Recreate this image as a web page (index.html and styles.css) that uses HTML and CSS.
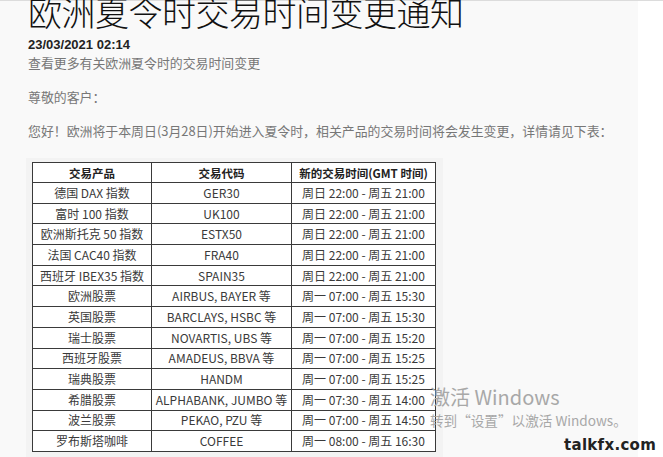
FILE: index.html
```html
<!DOCTYPE html>
<html lang="zh-CN">
<head>
<meta charset="utf-8">
<link rel="stylesheet" href="styles.css">
</head>
<body>
<div class="page">
  <main class="article">
    <h1 class="title">欧洲夏令时交易时间变更通知</h1>
    <div class="date">23/03/2021 02:14</div>
    <p class="sub">查看更多有关欧洲夏令时的交易时间变更</p>
    <p class="para">尊敬的客户：</p>
    <p class="para">您好！欧洲将于本周日(3月28日)开始进入夏令时，相关产品的交易时间将会发生变更，详情请见下表：</p>
    <div class="panel">
      <table class="hours">
        <thead>
          <tr><th class="c1">交易产品</th><th class="c2">交易代码</th><th class="c3">新的交易时间(GMT 时间)</th></tr>
        </thead>
        <tbody>
          <tr><td>德国 DAX 指数</td><td>GER30</td><td>周日 22:00 - 周五 21:00</td></tr>
          <tr><td>富时 100 指数</td><td>UK100</td><td>周日 22:00 - 周五 21:00</td></tr>
          <tr><td>欧洲斯托克 50 指数</td><td>ESTX50</td><td>周日 22:00 - 周五 21:00</td></tr>
          <tr><td>法国 CAC40 指数</td><td>FRA40</td><td>周日 22:00 - 周五 21:00</td></tr>
          <tr><td>西班牙 IBEX35 指数</td><td>SPAIN35</td><td>周日 22:00 - 周五 21:00</td></tr>
          <tr><td>欧洲股票</td><td>AIRBUS, BAYER 等</td><td>周一 07:00 - 周五 15:30</td></tr>
          <tr><td>英国股票</td><td>BARCLAYS, HSBC 等</td><td>周一 07:00 - 周五 15:30</td></tr>
          <tr><td>瑞士股票</td><td>NOVARTIS, UBS 等</td><td>周一 07:00 - 周五 15:20</td></tr>
          <tr><td>西班牙股票</td><td>AMADEUS, BBVA 等</td><td>周一 07:00 - 周五 15:25</td></tr>
          <tr><td>瑞典股票</td><td>HANDM</td><td>周一 07:00 - 周五 15:25</td></tr>
          <tr><td>希腊股票</td><td>ALPHABANK, JUMBO 等</td><td>周一 07:30 - 周五 14:00</td></tr>
          <tr><td>波兰股票</td><td>PEKAO, PZU 等</td><td>周一 07:00 - 周五 14:50</td></tr>
          <tr><td>罗布斯塔咖啡</td><td>COFFEE</td><td>周一 08:00 - 周五 16:30</td></tr>
        </tbody>
      </table>
    </div>
  </main>
  <aside class="side"></aside>
</div>
<div class="activate">
  <div class="act-title">激活 Windows</div>
  <div class="act-sub">转到“设置”以激活 Windows。</div>
</div>
<div class="brand">talkfx.com</div>
</body>
</html>
```
FILE: styles.css
```css
html, body {
  margin: 0;
  padding: 0;
  height: 100%;
  overflow: hidden;
}
body {
  font-family: "Noto Sans CJK SC", "Noto Sans", sans-serif;
  background: #ffffff;
  color: #333;
}
.page {
  display: flex;
  height: 457px;
  border-top: 1px solid #dcdcdc;
  box-sizing: border-box;
}
.article {
  width: 638px;
  background: #f9f9f9;
  padding: 0 0 0 28px;
  box-sizing: border-box;
}
.side {
  flex: 1;
  background: #ffffff;
}
.title {
  margin: -9px 0 0 0;
  font-size: 34px;
  line-height: 40px;
  font-weight: 300;
  color: #111;
  letter-spacing: -0.5px;
}
.date {
  margin-top: 5px;
  font-family: "Liberation Sans", Arial, sans-serif;
  font-weight: bold;
  font-size: 13px;
  line-height: 16px;
  color: #222;
}
.sub, .para {
  margin: 0;
  font-size: 12.9px;
  line-height: 18px;
  color: #777;
}
.sub { margin-top: 1px; }
.para { margin-top: 16px; }
.panel {
  margin: 18px 0 0 -2px;
  width: 411px;
  background: #f3f3f3;
  padding: 4px 0 6px 6px;
}
.hours {
  border-collapse: collapse;
  background: #fff;
  width: 401px;
  table-layout: fixed;
  font-size: 12px;
  color: #3a3a3a;
}
.hours th, .hours td {
  border: 1px solid #3a3a3a;
  padding: 0;
  text-align: center;
  white-space: nowrap;
  overflow: hidden;
}
.hours th {
  height: 19px;
  font-weight: bold;
  color: #222;
  font-size: 11.5px;
}
.hours td {
  height: 19.7px;
  line-height: 18px;
}
.c1 { width: 118px; }
.c2 { width: 139px; }
.c3 { width: 143px; }
.activate {
  position: absolute;
  left: 430px;
  top: 384px;
  color: #a8a8a8;
  font-family: "Noto Sans CJK SC", "Noto Sans", sans-serif;
}
.act-title {
  font-size: 20px;
  line-height: 25px;
}
.act-sub {
  font-size: 13.6px;
  line-height: 20px;
  margin-top: 1px;
}
.brand {
  position: absolute;
  left: 564px;
  top: 436px;
  font-family: "DejaVu Sans", sans-serif;
  font-weight: bold;
  font-size: 15px;
  letter-spacing: 0.3px;
  color: #222;
}
```
